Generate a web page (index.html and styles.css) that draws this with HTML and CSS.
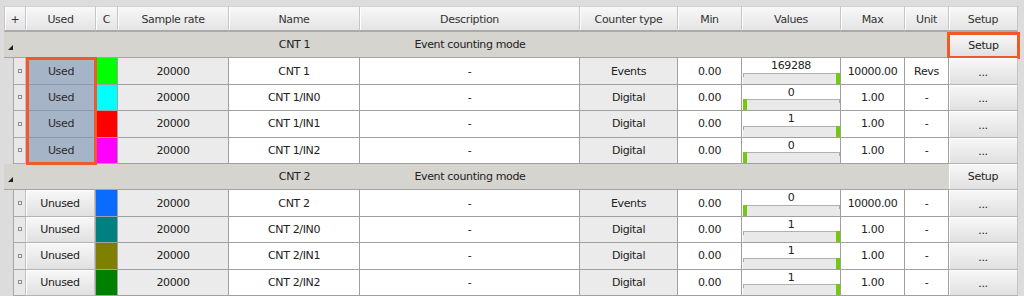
FILE: index.html
```html
<!DOCTYPE html>
<html>
<head>
<meta charset="utf-8">
<link rel="stylesheet" href="styles.css">
</head>
<body>
<div class="grid">
  <div class="row">
    <div class="hc plus">+</div>
    <div class="hc">Used</div>
    <div class="hc">C</div>
    <div class="hc">Sample rate</div>
    <div class="hc">Name</div>
    <div class="hc">Description</div>
    <div class="hc">Counter type</div>
    <div class="hc">Min</div>
    <div class="hc">Values</div>
    <div class="hc">Max</div>
    <div class="hc">Unit</div>
    <div class="hc">Setup</div>
  </div>

  <div class="row">
    <div class="g g-toggle"><svg width="5" height="5" viewBox="0 0 5 5"><polygon points="5,0 5,5 0,5" fill="#1e1e1e"/></svg></div>
    <div class="g">CNT 1</div>
    <div class="g">Event counting mode</div>
    <div class="g g-fill"></div>
    <div class="g-setup"><span class="btn setup-hl">Setup</span></div>
  </div>

  <div class="row">
    <div class="indent"></div>
    <div class="mark"><span></span></div>
    <div class="used-on hl-first">Used</div>
    <div class="sw c-lime"></div>
    <div class="c gray">20000</div>
    <div class="c">CNT 1</div>
    <div class="c">-</div>
    <div class="c gray">Events</div>
    <div class="c">0.00</div>
    <div class="c val"><span class="num">169288</span><div class="bar end"><i></i></div></div>
    <div class="c">10000.00</div>
    <div class="c">Revs</div>
    <div class="bc"><span class="btn dots">...</span></div>
  </div>
  <div class="row">
    <div class="indent"></div>
    <div class="mark"><span></span></div>
    <div class="used-on hl-mid">Used</div>
    <div class="sw c-cyan"></div>
    <div class="c gray">20000</div>
    <div class="c">CNT 1/IN0</div>
    <div class="c">-</div>
    <div class="c gray">Digital</div>
    <div class="c">0.00</div>
    <div class="c val"><span class="num">0</span><div class="bar"><i></i></div></div>
    <div class="c">1.00</div>
    <div class="c">-</div>
    <div class="bc"><span class="btn dots">...</span></div>
  </div>
  <div class="row">
    <div class="indent"></div>
    <div class="mark"><span></span></div>
    <div class="used-on hl-mid">Used</div>
    <div class="sw c-red"></div>
    <div class="c gray">20000</div>
    <div class="c">CNT 1/IN1</div>
    <div class="c">-</div>
    <div class="c gray">Digital</div>
    <div class="c">0.00</div>
    <div class="c val"><span class="num">1</span><div class="bar end"><i></i></div></div>
    <div class="c">1.00</div>
    <div class="c">-</div>
    <div class="bc"><span class="btn dots">...</span></div>
  </div>
  <div class="row">
    <div class="indent"></div>
    <div class="mark"><span></span></div>
    <div class="used-on hl-last">Used</div>
    <div class="sw c-magenta"></div>
    <div class="c gray">20000</div>
    <div class="c">CNT 1/IN2</div>
    <div class="c">-</div>
    <div class="c gray">Digital</div>
    <div class="c">0.00</div>
    <div class="c val"><span class="num">0</span><div class="bar"><i></i></div></div>
    <div class="c">1.00</div>
    <div class="c">-</div>
    <div class="bc"><span class="btn dots">...</span></div>
  </div>

  <div class="row">
    <div class="g g-toggle"><svg width="5" height="5" viewBox="0 0 5 5"><polygon points="5,0 5,5 0,5" fill="#1e1e1e"/></svg></div>
    <div class="g">CNT 2</div>
    <div class="g">Event counting mode</div>
    <div class="g g-fill"></div>
    <div class="g-setup"><span class="btn">Setup</span></div>
  </div>

  <div class="row">
    <div class="indent"></div>
    <div class="mark"><span></span></div>
    <div class="bc used-off"><span class="btn">Unused</span></div>
    <div class="sw c-blue"></div>
    <div class="c gray">20000</div>
    <div class="c">CNT 2</div>
    <div class="c">-</div>
    <div class="c gray">Events</div>
    <div class="c">0.00</div>
    <div class="c val"><span class="num">0</span><div class="bar"><i></i></div></div>
    <div class="c">10000.00</div>
    <div class="c">-</div>
    <div class="bc"><span class="btn dots">...</span></div>
  </div>
  <div class="row">
    <div class="indent"></div>
    <div class="mark"><span></span></div>
    <div class="bc used-off"><span class="btn">Unused</span></div>
    <div class="sw c-teal"></div>
    <div class="c gray">20000</div>
    <div class="c">CNT 2/IN0</div>
    <div class="c">-</div>
    <div class="c gray">Digital</div>
    <div class="c">0.00</div>
    <div class="c val"><span class="num">1</span><div class="bar end"><i></i></div></div>
    <div class="c">1.00</div>
    <div class="c">-</div>
    <div class="bc"><span class="btn dots">...</span></div>
  </div>
  <div class="row">
    <div class="indent"></div>
    <div class="mark"><span></span></div>
    <div class="bc used-off"><span class="btn">Unused</span></div>
    <div class="sw c-olive"></div>
    <div class="c gray">20000</div>
    <div class="c">CNT 2/IN1</div>
    <div class="c">-</div>
    <div class="c gray">Digital</div>
    <div class="c">0.00</div>
    <div class="c val"><span class="num">1</span><div class="bar end"><i></i></div></div>
    <div class="c">1.00</div>
    <div class="c">-</div>
    <div class="bc"><span class="btn dots">...</span></div>
  </div>
  <div class="row">
    <div class="indent"></div>
    <div class="mark"><span></span></div>
    <div class="bc used-off"><span class="btn">Unused</span></div>
    <div class="sw c-green"></div>
    <div class="c gray">20000</div>
    <div class="c">CNT 2/IN2</div>
    <div class="c">-</div>
    <div class="c gray">Digital</div>
    <div class="c">0.00</div>
    <div class="c val"><span class="num">1</span><div class="bar end"><i></i></div></div>
    <div class="c">1.00</div>
    <div class="c">-</div>
    <div class="bc"><span class="btn dots">...</span></div>
  </div>
</div>
</body>
</html>
```

FILE: styles.css
```css
* { box-sizing: border-box; }
html, body { margin: 0; padding: 0; }
body {
  background: #dcdcdc;
  width: 1024px;
  height: 296px;
  overflow: hidden;
  font-family: "DejaVu Sans", sans-serif;
  font-size: 11px;
  letter-spacing: -0.35px;
  color: #222;
}
.grid {
  display: grid;
  margin: 6px 0 0 4px;
  width: 1014px;
  grid-template-columns: 10px 12px 70px 22px 111px 131px 220px 98px 64px 99px 64px 44px 69px;
  grid-template-rows: 26px repeat(10, 26.4px);
}
.row { display: contents; }

/* header */
.hc {
  display: flex;
  align-items: center;
  justify-content: center;
  background: linear-gradient(#f8f8f8, #e4e4e4);
  border-top: 1px solid #d2d2d2;
  border-right: 1px solid #c6c6c6;
  border-bottom: 2px solid #aaaaaa;
  box-shadow: inset 1px 0 0 #ffffff;
  color: #333;
  padding-top: 1px;
}
.hc.plus { grid-column: 1 / 3; border-left: 1px solid #c6c6c6; }

/* group rows */
.g {
  display: flex;
  align-items: center;
  justify-content: center;
  background: #d6d4cf;
  border-bottom: 1px solid #a4a4a4;
  color: #222;
}
.g-toggle { grid-column: 1 / 6; justify-content: flex-start; padding: 6px 0 0 4px; }
.g-fill { grid-column: 8 / 13; }
.g-setup { display: flex; }

/* buttons */
.btn {
  flex: 1;
  display: flex;
  align-items: center;
  justify-content: center;
  background: linear-gradient(#f8f8f8, #e0e0e0);
  border-bottom: 1px solid #b4b4b4;
  border-right: 1px solid #c4c4c4;
  box-shadow: inset 1px 1px 0 #ffffff;
  color: #222;
}
.setup-hl {
  margin: 0 -2px -1px;
  border: 3px solid #f05a28;
  box-shadow: none;
}
.bc { display: flex; }
.used-off { border-right: 1px solid #a0a0a0; }
.dots { padding-top: 3px; }

/* data rows */
.indent { border-right: 1px solid #a8a8a8; }
.mark {
  display: flex;
  align-items: center;
  justify-content: center;
  background: #e8e8e8;
  border-right: 1px solid #c0c0c0;
  border-bottom: 1px solid #a8a8a8;
}
.mark span {
  width: 4px;
  height: 4px;
  border: 1px solid #8c8c8c;
  background: #efefef;
}
.c {
  display: flex;
  align-items: center;
  justify-content: center;
  background: #ffffff;
  border-right: 1px solid #a0a0a0;
  border-bottom: 1px solid #a0a0a0;
}
.c.gray { background: #ebebeb; }

.used-on {
  position: relative;
  display: flex;
  align-items: center;
  justify-content: center;
  background: #a6b4c8;
  border-bottom: 1px solid #8e9aab;
  color: #2a2a2a;
}
.used-on::after {
  content: "";
  position: absolute;
  top: 0;
  bottom: -1px;
  left: 0;
  right: -1px;
  border-left: 3px solid #f05a28;
  border-right: 3px solid #f05a28;
}
.hl-first::after { top: -1px; border-top: 3px solid #f05a28; }
.hl-last::after { bottom: -2px; border-bottom: 3px solid #f05a28; }

.sw {
  border-right: 1px solid #a0a0a0;
  border-bottom: 1px solid #a0a0a0;
}
.c-lime { background: #00ff00; }
.c-cyan { background: #00ffff; }
.c-red { background: #ff0000; }
.c-magenta { background: #ff00ff; }
.c-blue { background: #0a6cff; }
.c-teal { background: #008080; }
.c-olive { background: #808000; }
.c-green { background: #008000; }

/* values */
.c.val {
  flex-direction: column;
  align-items: stretch;
  justify-content: flex-start;
}
.num {
  text-align: center;
  line-height: 12px;
  padding-top: 2px;
}
.bar {
  display: flex;
  justify-content: flex-start;
  margin: auto 0 0 1px;
  height: 11px;
  border-top: 1px solid #b0b0b0;
  background:
    linear-gradient(#a8a8a8, #a8a8a8) left top / 1px 3px no-repeat,
    linear-gradient(#a8a8a8, #a8a8a8) right top / 1px 3px no-repeat,
    #e9e9e9;
}
.bar.end { justify-content: flex-end; }
.bar i {
  display: block;
  width: 4px;
  margin-top: -1px;
  background: #74c80e;
}
```
